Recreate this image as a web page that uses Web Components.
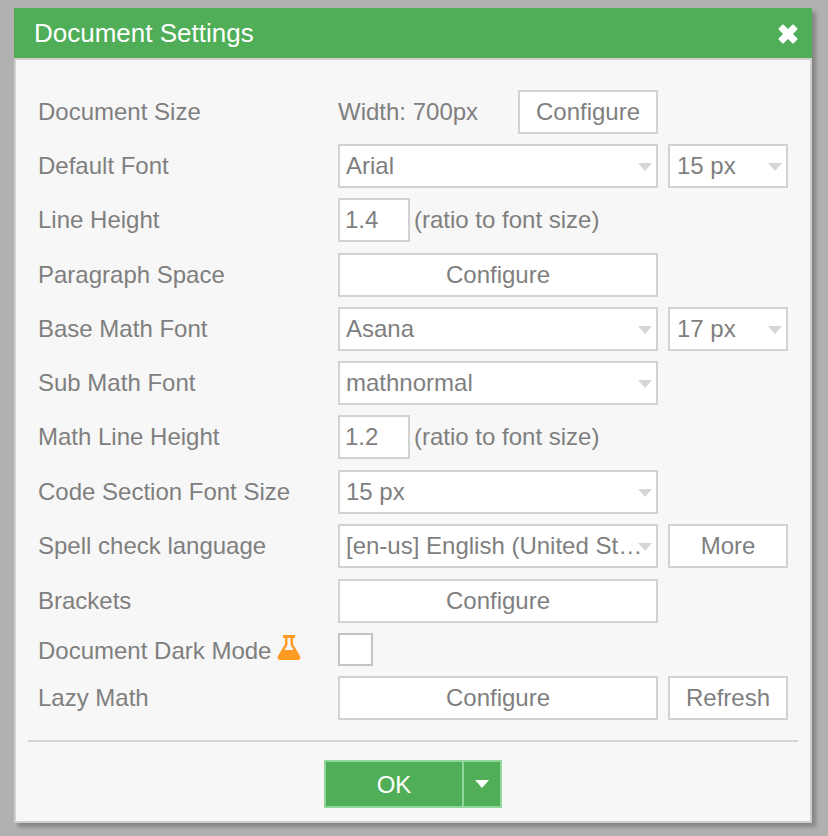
<!DOCTYPE html>
<html>
<head>
<meta charset="utf-8">
<title>Document Settings</title>
<style>
    html, body { margin: 0; height: 100%; }
    body {
        background: #b1b1b1;
        font-family: "Liberation Sans", Arial, sans-serif;
        overflow: hidden;
    }
</style>
</head>
<body>
<settings-dialog heading="Document Settings">
    <setting-row label="Document Size">
        <span class="plain" style="width:180px;color:#7f7f7f;font-size:24px">Width: 700px</span>
        <push-button style="width:140px">Configure</push-button>
    </setting-row>
    <setting-row label="Default Font">
        <select-box style="width:320px">Arial</select-box>
        <select-box style="width:120px;margin-left:10px;padding-left:7px">15 px</select-box>
    </setting-row>
    <setting-row label="Line Height">
        <num-box>1.4</num-box>
        <span style="margin-left:4px;color:#7f7f7f;font-size:24px">(ratio to font size)</span>
    </setting-row>
    <setting-row label="Paragraph Space" nudge>
        <push-button style="width:320px">Configure</push-button>
    </setting-row>
    <setting-row label="Base Math Font">
        <select-box style="width:320px">Asana</select-box>
        <select-box style="width:120px;margin-left:10px;padding-left:7px">17 px</select-box>
    </setting-row>
    <setting-row label="Sub Math Font">
        <select-box style="width:320px">mathnormal</select-box>
    </setting-row>
    <setting-row label="Math Line Height">
        <num-box>1.2</num-box>
        <span style="margin-left:4px;color:#7f7f7f;font-size:24px">(ratio to font size)</span>
    </setting-row>
    <setting-row label="Code Section Font Size" nudge>
        <select-box style="width:320px">15 px</select-box>
    </setting-row>
    <setting-row label="Spell check language">
        <select-box style="width:320px">[en-us] English (United States)</select-box>
        <push-button style="width:120px;margin-left:10px">More</push-button>
    </setting-row>
    <setting-row label="Brackets" nudge>
        <push-button style="width:320px">Configure</push-button>
    </setting-row>
    <setting-row label="Document Dark Mode" flask short>
        <check-box></check-box>
    </setting-row>
    <setting-row label="Lazy Math">
        <push-button style="width:320px">Configure</push-button>
        <push-button style="width:120px;margin-left:10px">Refresh</push-button>
    </setting-row>
</settings-dialog>

<script>
class SettingsDialog extends HTMLElement {
    constructor() {
        super();
        this.attachShadow({ mode: "open" });
        this.shadowRoot.innerHTML = `
            <style>
                :host {
                    display: flex;
                    flex-direction: column;
                    box-sizing: border-box;
                    width: 798px;
                    height: 815px;
                    margin: 8px 0 0 14px;
                    background: #f7f7f7;
                    border: 2px solid #cfcfcf;
                    border-top: 0;
                    box-shadow: 4px 4px 4px rgba(0, 0, 0, 0.25);
                }
                header {
                    display: flex;
                    align-items: center;
                    justify-content: space-between;
                    height: 50px;
                    margin: 0 -2px;
                    padding: 0 13px 0 20px;
                    background: #4fae57;
                    border-bottom: 2px solid #cfcfcf;
                    color: #fff;
                    font-size: 26px;
                }
                header svg { display: block; margin-top: 1px; }
                main {
                    display: flex;
                    flex-direction: column;
                    gap: 10px;
                    padding: 30px 22px 0 22px;
                }
                hr {
                    margin: 20px 12px 0 12px;
                    border: 0;
                    border-top: 2px solid #d4d4d4;
                }
                footer {
                    display: flex;
                    justify-content: center;
                    margin-top: 18px;
                }
            </style>
            <header>
                <span id="title"></span>
                <svg width="22" height="22" viewBox="0 0 22 22">
                    <path d="M2.500 6 6 2.500 11 7.500 16 2.500 19.500 6 14.500 11 19.500 16 16 19.500 11 14.500 6 19.500 2.500 16 7.500 11Z" fill="#fff" stroke="#fff" stroke-width="2" stroke-linejoin="round"/>
                </svg>
            </header>
            <main><slot></slot></main>
            <hr>
            <footer><split-button>OK</split-button></footer>
        `;
        this.shadowRoot.getElementById("title").textContent = this.getAttribute("heading");
    }
}

class SettingRow extends HTMLElement {
    constructor() {
        super();
        this.attachShadow({ mode: "open" });
        this.shadowRoot.innerHTML = `
            <style>
                :host {
                    display: flex;
                    align-items: center;
                    height: 44px;
                }
                :host([nudge]) { margin-top: 1px; }
                :host([short]) { height: 33px; }
                :host([short]) #text { margin-top: 2px; }
                .label {
                    display: flex;
                    align-items: center;
                    flex: 0 0 300px;
                    color: #7f7f7f;
                    font-size: 24px;
                }
                svg { margin: -6px 0 0 6px; }
                .field { display: flex; align-items: center; }
            </style>
            <div class="label"><span id="text"></span></div>
            <div class="field"><slot></slot></div>
        `;
        this.shadowRoot.getElementById("text").textContent = this.getAttribute("label");
        if (this.hasAttribute("flask")) {
            this.shadowRoot.querySelector(".label").insertAdjacentHTML("beforeend", `
                <svg width="24" height="26" viewBox="0 0 24 26">
                    <path fill-rule="evenodd" fill="#ff9a24" d="M6 1H18V4H16V10L23 22C24 24 23 26 20.500 26H3.500C1 26 0 24 1 22L8 10V4H6ZM10.500 4V10.800L7.500 16H16.500L13.500 10.800V4Z"/>
                </svg>`);
        }
    }
}

class SelectBox extends HTMLElement {
    constructor() {
        super();
        this.attachShadow({ mode: "open" });
        this.shadowRoot.innerHTML = `
            <style>
                :host {
                    display: flex;
                    align-items: center;
                    box-sizing: border-box;
                    height: 44px;
                    padding: 0 4px 0 6px;
                    background: #fff;
                    border: 2px solid #d2d2d2;
                    color: #7f7f7f;
                    font-size: 24px;
                }
                .value {
                    flex: 1;
                    min-width: 0;
                    overflow: hidden;
                    white-space: nowrap;
                    text-overflow: ellipsis;
                }
                i {
                    flex: none;
                    width: 0;
                    height: 0;
                    margin: 2px 0 0 -8px;
                    border: 7px solid transparent;
                    border-top: 8px solid #d6d6d6;
                    border-bottom: 0;
                }
            </style>
            <span class="value"><slot></slot></span>
            <i></i>
        `;
    }
}

class PushButton extends HTMLElement {
    constructor() {
        super();
        this.attachShadow({ mode: "open" });
        this.shadowRoot.innerHTML = `
            <style>
                :host {
                    display: flex;
                    align-items: center;
                    justify-content: center;
                    box-sizing: border-box;
                    height: 44px;
                    background: #fff;
                    border: 2px solid #d2d2d2;
                    color: #7f7f7f;
                    font-size: 24px;
                }
            </style>
            <slot></slot>
        `;
    }
}

class NumBox extends HTMLElement {
    constructor() {
        super();
        this.attachShadow({ mode: "open" });
        this.shadowRoot.innerHTML = `
            <style>
                :host {
                    display: flex;
                    align-items: center;
                    box-sizing: border-box;
                    width: 72px;
                    height: 44px;
                    padding-left: 5px;
                    background: #fff;
                    border: 2px solid #d2d2d2;
                    color: #7f7f7f;
                    font-size: 24px;
                }
            </style>
            <slot></slot>
        `;
    }
}

class CheckBox extends HTMLElement {
    constructor() {
        super();
        this.attachShadow({ mode: "open" });
        this.shadowRoot.innerHTML = `
            <style>
                :host {
                    display: block;
                    box-sizing: border-box;
                    width: 35px;
                    height: 33px;
                    background: #fff;
                    border: 2px solid #c4c4c4;
                }
            </style>
        `;
    }
}

class SplitButton extends HTMLElement {
    constructor() {
        super();
        this.attachShadow({ mode: "open" });
        this.shadowRoot.innerHTML = `
            <style>
                :host {
                    display: flex;
                    box-sizing: border-box;
                    width: 178px;
                    height: 48px;
                    background: #4fae57;
                    border: 2px solid #93d69a;
                    color: #fff;
                    font-size: 24px;
                }
                .main {
                    display: flex;
                    align-items: center;
                    justify-content: center;
                    flex: 1;
                    padding-top: 1px;
                }
                .arrow {
                    display: flex;
                    align-items: center;
                    justify-content: center;
                    width: 36px;
                    border-left: 2px solid #93d69a;
                }
                i {
                    width: 0;
                    height: 0;
                    border: 7px solid transparent;
                    border-top: 8px solid #fff;
                    border-bottom: 0;
                }
            </style>
            <div class="main"><slot></slot></div>
            <div class="arrow"><i></i></div>
        `;
    }
}

customElements.define("settings-dialog", SettingsDialog);
customElements.define("setting-row", SettingRow);
customElements.define("select-box", SelectBox);
customElements.define("push-button", PushButton);
customElements.define("num-box", NumBox);
customElements.define("check-box", CheckBox);
customElements.define("split-button", SplitButton);
</script>
</body>
</html>
